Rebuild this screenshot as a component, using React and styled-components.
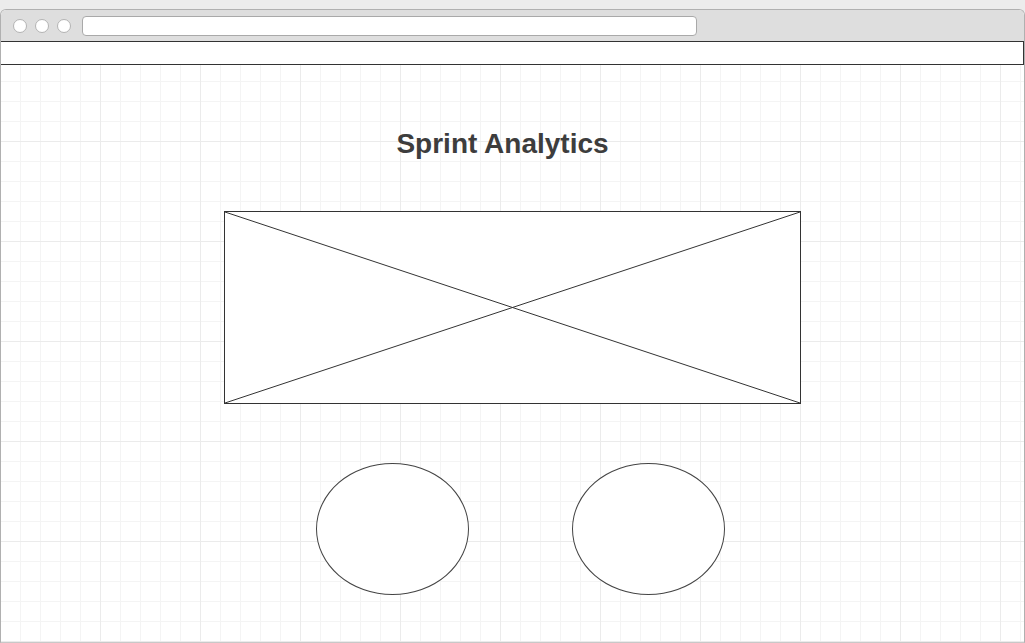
import React from "react";
import styled, { createGlobalStyle } from "styled-components";

const GlobalStyle = createGlobalStyle`
  html, body {
    margin: 0;
    padding: 0;
    background: #ececec;
    font-family: "Liberation Sans", Arial, sans-serif;
  }
`;

const Page = styled.div`
  width: 1025px;
  height: 643px;
  padding-top: 9px;
  box-sizing: border-box;
  overflow: hidden;
`;

const BrowserWindow = styled.div`
  height: 632px;
  border: 1px solid #b0b0b0;
  border-bottom-color: #c8c8c8;
  border-radius: 6px 6px 0 0;
  background: #ffffff;
  display: flex;
  flex-direction: column;
  overflow: hidden;
`;

const ChromeBar = styled.div`
  height: 31px;
  flex-shrink: 0;
  background: #dedede;
  display: flex;
  align-items: center;
  padding-left: 12px;
  gap: 8px;
`;

const Dot = styled.span`
  width: 12px;
  height: 12px;
  border-radius: 50%;
  background: #ffffff;
  border: 1px solid #b3b3b3;
`;

const AddressBar = styled.div`
  width: 613px;
  height: 18px;
  margin-left: 3px;
  background: #ffffff;
  border: 1px solid #a9a9a9;
  border-radius: 4px;
`;

const Viewport = styled.div`
  flex: 1;
  display: flex;
  flex-direction: column;
  background-color: #ffffff;
  background-image: linear-gradient(to right, #ebebeb 1px, transparent 1px),
    linear-gradient(to bottom, #ebebeb 1px, transparent 1px),
    linear-gradient(to right, #f4f4f4 1px, transparent 1px),
    linear-gradient(to bottom, #f4f4f4 1px, transparent 1px);
  background-size: 100px 100px, 100px 100px, 20px 20px, 20px 20px;
  background-position: -1px 0;
`;

const NavBar = styled.div`
  height: 22px;
  flex-shrink: 0;
  background: #ffffff;
  border: 1px solid #333333;
  margin-left: -1px;
`;

const Canvas = styled.main`
  flex: 1;
  display: flex;
  flex-direction: column;
  align-items: center;
  padding-top: 64px;
`;

const Title = styled.h1`
  margin: 0 20px 0 0;
  font-size: 28px;
  line-height: 30px;
  font-weight: bold;
  color: #3d3d3d;
  font-family: "Liberation Sans", Arial, sans-serif;
`;

const ImagePlaceholder = styled.div`
  margin-top: 52px;
  width: 575px;
  height: 191px;
  border: 1px solid #333333;
  background: #ffffff;
  margin-right: 1px;
`;

const Cross = styled.svg`
  display: block;
  width: 100%;
  height: 100%;
`;

const CircleRow = styled.div`
  margin-top: 59px;
  display: flex;
  gap: 103px;
  margin-left: 15px;
`;

const Ellipse = styled.div`
  width: 151px;
  height: 130px;
  border: 1px solid #444444;
  border-radius: 50%;
  background: #ffffff;
`;

const App = () => {
  return (
    <>
      <GlobalStyle />
      <Page>
        <BrowserWindow>
          <ChromeBar>
            <Dot />
            <Dot />
            <Dot />
            <AddressBar />
          </ChromeBar>
          <Viewport>
            <NavBar />
            <Canvas>
              <Title>Sprint Analytics</Title>
              <ImagePlaceholder>
                <Cross viewBox="0 0 100 100" preserveAspectRatio="none">
                  <line x1="0" y1="0" x2="100" y2="100" stroke="#333" strokeWidth="1" vectorEffect="non-scaling-stroke" />
                  <line x1="100" y1="0" x2="0" y2="100" stroke="#333" strokeWidth="1" vectorEffect="non-scaling-stroke" />
                </Cross>
              </ImagePlaceholder>
              <CircleRow>
                <Ellipse />
                <Ellipse />
              </CircleRow>
            </Canvas>
          </Viewport>
        </BrowserWindow>
      </Page>
    </>
  );
};

export default App;
